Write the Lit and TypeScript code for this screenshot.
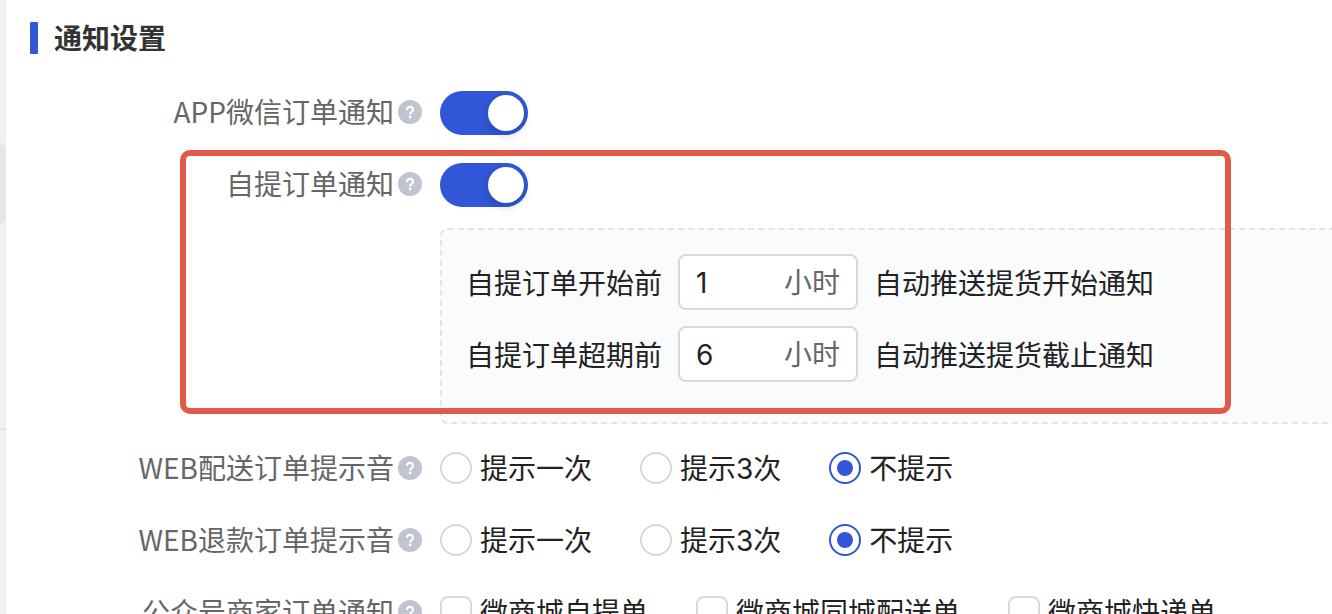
import { LitElement, html, css } from "lit";
import { customElement, property } from "lit/decorators.js";

@customElement("help-button")
class HelpButton extends LitElement {
  static styles = css`
    :host { display: block; height: 24px; }
    .help { display: block; width: 24px; height: 24px; padding: 0; border: 0; background: none; cursor: pointer; }
    .icon { display: block; }
  `;
  render() {
    return html`<button class="help" type="button" aria-label="帮助">
      <svg class="icon" width="24" height="24" viewBox="0 0 24 24" fill="none">
        <circle cx="12" cy="12" r="12" fill="#c0c4ce" />
        <path d="M8.9 9.9C8.9 7.9 10.2 6.9 12 6.9s3.1 1.1 3.1 2.8c0 1.3-.7 1.9-1.6 2.5-.9.7-1.4 1.1-1.4 2.3" stroke="#fff" stroke-width="2.1" />
        <circle cx="12.1" cy="17" r="1.4" fill="#fff" />
      </svg>
    </button>`;
  }
}

@customElement("setting-row")
class SettingRow extends LitElement {
  @property() label = "";
  static styles = css`
    :host { display: grid; grid-template-columns: 416px 1fr; column-gap: 18px; align-items: center; min-height: 56px; }
    .label { display: flex; align-items: center; justify-content: flex-end; gap: 4px; color: #666; white-space: nowrap; }
    .text { padding-bottom: 2px; }
    .controls { display: flex; align-items: center; gap: 48px; white-space: nowrap; }
  `;
  render() {
    return html`
      <div class="label"><span class="text">${this.label}</span><help-button></help-button></div>
      <div class="controls" role="group" aria-label=${this.label}><slot></slot></div>
    `;
  }
}

@customElement("app-root")
class AppRoot extends LitElement {
  static styles = css`
    :host {
      display: flex;
      height: 100vh;
      overflow: hidden;
      background: #fff;
      color: #222;
      font-family: "Noto Sans CJK SC", sans-serif;
      font-size: 28px;
      line-height: 40px;
    }
    .rail { flex: none; width: 6px; overflow: hidden; background: #f1f1f1; }
    .handle { width: 7px; height: 81px; margin-top: 143px; border-radius: 0 7px 7px 0 / 0 12px 12px 0; background: #e5e5e5; }
    .divider { height: 2px; margin-top: 204px; background: #e2e2e2; }
    .page { flex: 1; min-width: 0; padding-top: 22px; }
    .title { display: flex; align-items: center; gap: 16px; height: 32px; margin: 0 0 30px 24px; font-size: 28px; font-weight: 700; color: #333; }
    .title::before { content: ""; width: 8px; height: 32px; border-radius: 1px; background: #3157d8; }
    .title-text { padding-bottom: 2px; }
    .rows { display: flex; flex-direction: column; gap: 16px; }
    .pickup { position: relative; display: flex; flex-direction: column; gap: 16px; }
    .highlight { position: absolute; top: -6px; bottom: 10px; left: 174px; right: 101px; box-sizing: border-box; border: 6px solid #e05a48; border-radius: 10px; pointer-events: none; }
    .panel { display: flex; flex-direction: column; gap: 16px; margin: 0 -24px 0 434px; padding: 24px 24px 40px; border: 2px dashed #e3e4e6; border-radius: 8px; background: #fafbfd; }
    .rule { display: flex; align-items: center; gap: 16px; white-space: nowrap; }
    .field { display: flex; align-items: center; box-sizing: border-box; width: 180px; height: 56px; padding: 0 16px; border: 2px solid #d9d9d9; border-radius: 8px; background: #fff; }
    .number { flex: 1; min-width: 0; padding: 2px 0 0; border: 0; outline: 0; background: none; color: #222; font-family: Inter, sans-serif; font-size: 28px; line-height: 40px; }
    .unit { padding-bottom: 2px; color: #666; }
    .switch { appearance: none; display: flex; justify-content: flex-end; align-items: center; box-sizing: border-box; width: 88px; height: 44px; margin: 2px 0 0; padding: 4px; border-radius: 22px; background: #3157d8; }
    .switch::before { content: ""; width: 36px; height: 36px; border-radius: 50%; background: #fff; box-shadow: 0 4px 8px rgba(0, 35, 11, 0.2); }
    .option { display: flex; align-items: center; gap: 8px; font-family: Inter, "Noto Sans CJK SC", sans-serif; }
    .option-text { padding-top: 2px; }
    .mark { appearance: none; display: grid; place-items: center; box-sizing: border-box; width: 32px; height: 32px; margin: 0; border: 2px solid #d9d9d9; background: #fff; }
    .radio { border-radius: 50%; }
    .radio:checked { border-color: #3157d8; }
    .radio:checked::before { content: ""; width: 16px; height: 16px; border-radius: 50%; background: #3157d8; }
    .check { border-radius: 8px; }
    .check:checked { border-color: #3157d8; background: #3157d8; }
  `;

  private sounds = [
    { name: "delivery", label: "WEB配送订单提示音" },
    { name: "refund", label: "WEB退款订单提示音" },
  ];
  private rules = [
    { before: "自提订单开始前", value: "1", after: "自动推送提货开始通知" },
    { before: "自提订单超期前", value: "6", after: "自动推送提货截止通知" },
  ];

  render() {
    return html`
      <aside class="rail"><div class="handle"></div><div class="divider"></div></aside>
      <main class="page">
        <h2 class="title"><span class="title-text">通知设置</span></h2>
        <form class="rows">
          <setting-row label="APP微信订单通知">
            <input class="switch" type="checkbox" role="switch" aria-label="APP微信订单通知" checked />
          </setting-row>
          <div class="pickup">
            <setting-row label="自提订单通知">
              <input class="switch" type="checkbox" role="switch" aria-label="自提订单通知" checked />
            </setting-row>
            <div class="panel">
              ${this.rules.map((r, i) => html`
                <div class="rule">
                  <label for="rule-${i}">${r.before}</label>
                  <span class="field">
                    <input class="number" id="rule-${i}" type="text" inputmode="numeric" .value=${r.value} />
                    <span class="unit">小时</span>
                  </span>
                  <span>${r.after}</span>
                </div>`)}
            </div>
            <div class="highlight"></div>
          </div>
          ${this.sounds.map((s) => html`
            <setting-row label=${s.label}>
              ${["提示一次", "提示3次", "不提示"].map((o, i) => html`
                <label class="option"><input class="mark radio" type="radio" name=${s.name} ?checked=${i === 2} /><span class="option-text">${o}</span></label>`)}
            </setting-row>`)}
          <setting-row label="公众号商家订单通知">
            ${["微商城自提单", "微商城同城配送单", "微商城快递单"].map((o) => html`
              <label class="option"><input class="mark check" type="checkbox" /><span class="option-text">${o}</span></label>`)}
          </setting-row>
        </form>
      </main>
    `;
  }
}
